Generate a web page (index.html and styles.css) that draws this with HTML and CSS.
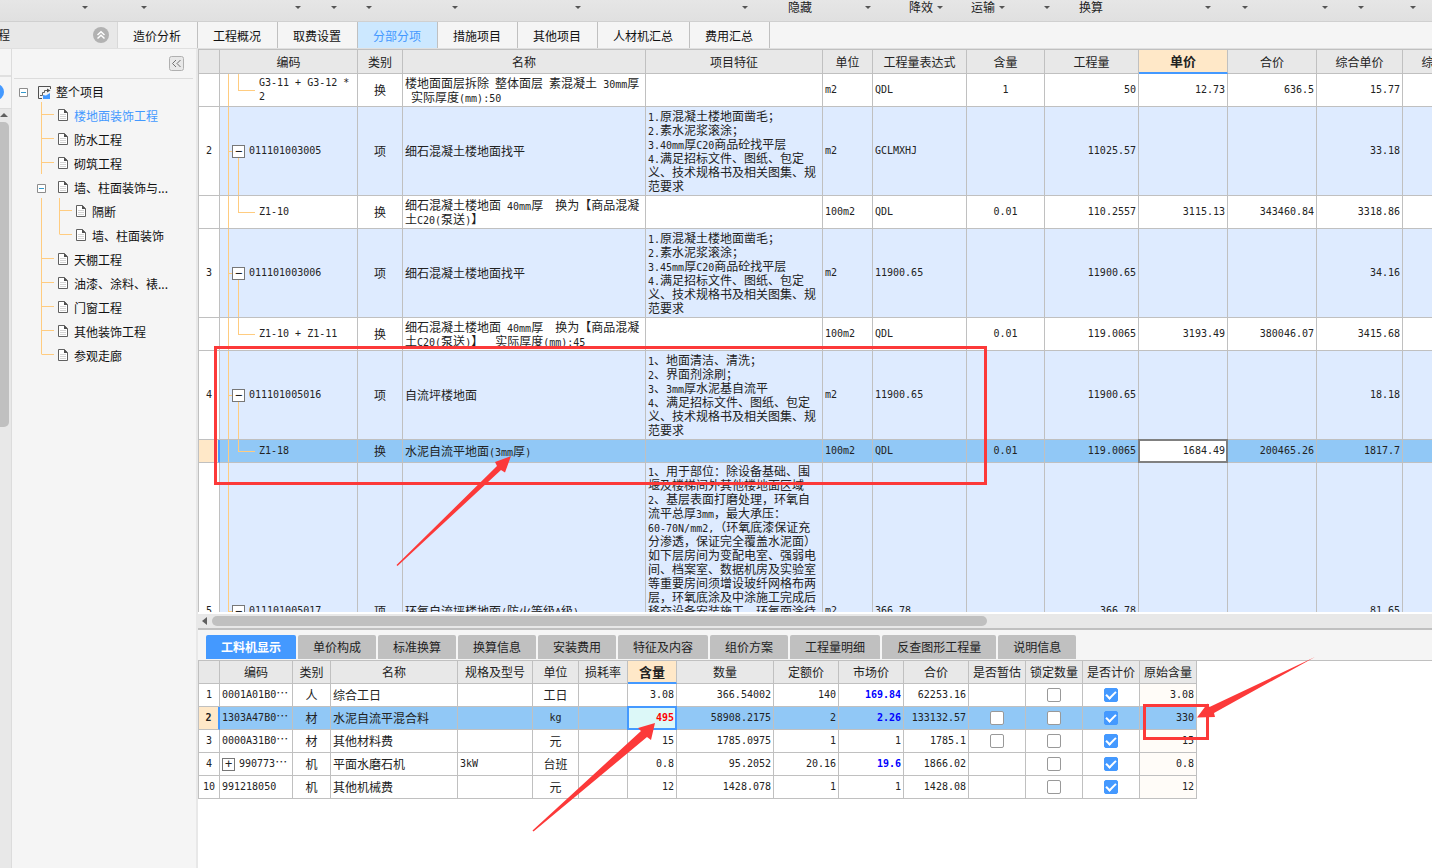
FILE: index.html
```html
<!DOCTYPE html>
<html lang="zh-CN">
<head>
<meta charset="utf-8">
<title>分部分项</title>
<link rel="stylesheet" href="styles.css">
</head>
<body>
<svg class="defs" width="0" height="0" aria-hidden="true">
  <symbol id="doc" viewBox="0 0 10 12"><path d="M.5.5h5.800L9.500 3.700v7.800h-9z" fill="#fff" stroke="#606060"/><path d="M6 0v4h4z" fill="#505050"/><path d="M2 5.500h6M2 7.500h6M2 9.500h6" stroke="#d4d4d4"/></symbol>
  <symbol id="minus" viewBox="0 0 9 9"><path d="M.5.5h8v8h-8z" fill="#fff" stroke="#8c8c8c"/><path d="M2 4.500h5" stroke="#3399cc"/></symbol>
</svg>

<header class="toolbar">
  <button><i></i></button><button><i></i></button><button><i></i></button><button><i></i></button><button><i></i></button><button><i></i></button><button><i></i></button><button><i></i></button>
  <button>隐藏</button><button><i></i></button><button>降效<i></i></button><button>运输<i></i></button><button><i></i></button><button>换算</button>
  <button><i></i></button><button><i></i></button><button><i></i></button><button><i></i></button><button><i></i></button>
</header>

<nav class="tabs">
  <div class="project">程
    <button class="up" aria-label="收起"><svg width="16" height="16" viewBox="0 0 16 16"><circle cx="8" cy="8" r="8" fill="#b2b2b2"/><path d="M4.500 8L8 4.800 11.500 8M4.500 11.500L8 8.300l3.500 3.200" fill="none" stroke="#fff" stroke-width="1.500"/></svg></button>
  </div>
  <button>造价分析</button><button>工程概况</button><button>取费设置</button><button class="on">分部分项</button><button>措施项目</button><button>其他项目</button><button>人材机汇总</button><button>费用汇总</button>
</nav>

<div class="body">
  <div class="rail">
    <div class="rail-box"></div>
    <div class="rail-dot"><svg width="5" height="16"><circle cx="-4" cy="8" r="8" fill="#4499ff"/></svg></div>
    <div class="rail-scroll"><i class="arrow-up"></i><div class="rail-thumb"></div></div>
  </div>

  <aside class="side">
    <div class="side-head"><button aria-label="折叠"><svg width="15" height="15"><rect x=".5" y=".5" width="14" height="14" rx="2" fill="#e8e8e8" stroke="#b0b0b0"/><path d="M7 4L3.500 7.500 7 11M11.500 4L8 7.500l3.500 3.500" fill="none" stroke="#707070"/></svg></button></div>
    <div class="tree">
      <svg class="tree-lines" width="80" height="290"><path d="M29.500 23v72M29.500 119v156.500M30 35.500h12M30 59.500h12M30 83.500h12M47.500 119v36.500M48 131.500h12M48 155.500h12M30 179.500h12M30 203.500h12M30 227.500h12M30 251.500h12M30 275.500h12" fill="none" stroke="#ffcc80"/></svg>
      <div class="node root"><svg class="box"><use href="#minus"/></svg><svg class="proj" width="13" height="13"><path d="M12.500 3V.5H.5v12H4" fill="none" stroke="#505050"/><path d="M2 9.500h2.500v-3h2v-2h3" fill="none" stroke="#606060"/><path d="M9 2.500l3.500 2-3.500 2z" fill="#505050"/><path d="M5 9l3 .5L12 7v6H5z" fill="#4499ff"/></svg><a href="#">整个项目</a></div>
      <div class="node l1"><svg class="doc"><use href="#doc"/></svg><a class="cur" href="#">楼地面装饰工程</a></div>
      <div class="node l1"><svg class="doc"><use href="#doc"/></svg><a href="#">防水工程</a></div>
      <div class="node l1"><svg class="doc"><use href="#doc"/></svg><a href="#">砌筑工程</a></div>
      <div class="node l1 open"><svg class="box"><use href="#minus"/></svg><svg class="doc"><use href="#doc"/></svg><a href="#">墙、柱面装饰与...</a></div>
      <div class="node l2"><svg class="doc"><use href="#doc"/></svg><a href="#">隔断</a></div>
      <div class="node l2"><svg class="doc"><use href="#doc"/></svg><a href="#">墙、柱面装饰</a></div>
      <div class="node l1"><svg class="doc"><use href="#doc"/></svg><a href="#">天棚工程</a></div>
      <div class="node l1"><svg class="doc"><use href="#doc"/></svg><a href="#">油漆、涂料、裱...</a></div>
      <div class="node l1"><svg class="doc"><use href="#doc"/></svg><a href="#">门窗工程</a></div>
      <div class="node l1"><svg class="doc"><use href="#doc"/></svg><a href="#">其他装饰工程</a></div>
      <div class="node l1"><svg class="doc"><use href="#doc"/></svg><a href="#">参观走廊</a></div>
    </div>
  </aside>

  <main class="main">
    <section class="upper">
      <table class="grid items">
        <colgroup><col class="w21"><col class="w138"><col class="w45"><col class="w243"><col class="w177"><col class="w50"><col class="w94"><col class="w78"><col class="w94"><col class="w89"><col class="w89"><col class="w86"><col class="w86"></colgroup>
        <thead><tr><th></th><th>编码</th><th>类别</th><th>名称</th><th>项目特征</th><th>单位</th><th>工程量表达式</th><th>含量</th><th>工程量</th><th class="hot">单价</th><th>合价</th><th>综合单价</th><th>综合合价</th></tr></thead>
        <tbody>
          <tr class="h33"><td></td><td class="m child">G3-11 + G3-12 *<br>2</td><td class="c">换</td><td>楼地面面层拆除<span class="m"> </span>整体面层<span class="m"> </span>素混凝土<span class="m"> 30mm</span>厚<br><span class="m"> </span>实际厚度<span class="m">(mm):50</span></td><td></td><td class="m">m2</td><td class="m">QDL</td><td class="m c">1</td><td class="m r">50</td><td class="m r">12.73</td><td class="m r">636.5</td><td class="m r">15.77</td><td></td></tr>
          <tr class="h89 blue"><td class="m c no">2</td><td class="m parent"><button class="exp">−</button>011101003005</td><td class="c">项</td><td>细石混凝土楼地面找平</td><td><span class="m">1.</span>原混凝土楼地面凿毛；<br><span class="m">2.</span>素水泥浆滚涂；<br><span class="m">3.40mm</span>厚<span class="m">C20</span>商品砼找平层<br><span class="m">4.</span>满足招标文件、图纸、包定<br>义、技术规格书及相关图集、规<br>范要求</td><td class="m">m2</td><td class="m">GCLMXHJ</td><td></td><td class="m r">11025.57</td><td></td><td></td><td class="m r">33.18</td><td></td></tr>
          <tr class="h33"><td></td><td class="m child">Z1-10</td><td class="c">换</td><td>细石混凝土楼地面<span class="m"> 40mm</span>厚<span class="m">  </span>换为【商品混凝<br>土<span class="m">C20(</span>泵送<span class="m">)</span>】</td><td></td><td class="m">100m2</td><td class="m">QDL</td><td class="m c">0.01</td><td class="m r">110.2557</td><td class="m r">3115.13</td><td class="m r">343460.84</td><td class="m r">3318.86</td><td></td></tr>
          <tr class="h89 blue"><td class="m c no">3</td><td class="m parent"><button class="exp">−</button>011101003006</td><td class="c">项</td><td>细石混凝土楼地面找平</td><td><span class="m">1.</span>原混凝土楼地面凿毛；<br><span class="m">2.</span>素水泥浆滚涂；<br><span class="m">3.45mm</span>厚<span class="m">C20</span>商品砼找平层<br><span class="m">4.</span>满足招标文件、图纸、包定<br>义、技术规格书及相关图集、规<br>范要求</td><td class="m">m2</td><td class="m">11900.65</td><td></td><td class="m r">11900.65</td><td></td><td></td><td class="m r">34.16</td><td></td></tr>
          <tr class="h33"><td></td><td class="m child">Z1-10 + Z1-11</td><td class="c">换</td><td>细石混凝土楼地面<span class="m"> 40mm</span>厚<span class="m">  </span>换为【商品混凝<br>土<span class="m">C20(</span>泵送<span class="m">)</span>】<span class="m">  </span>实际厚度<span class="m">(mm):45</span></td><td></td><td class="m">100m2</td><td class="m">QDL</td><td class="m c">0.01</td><td class="m r">119.0065</td><td class="m r">3193.49</td><td class="m r">380046.07</td><td class="m r">3415.68</td><td></td></tr>
          <tr class="h89 blue"><td class="m c no">4</td><td class="m parent"><button class="exp">−</button>011101005016</td><td class="c">项</td><td>自流坪楼地面</td><td><span class="m">1</span>、地面清洁、清洗；<br><span class="m">2</span>、界面剂涂刷；<br><span class="m">3</span>、<span class="m">3mm</span>厚水泥基自流平<br><span class="m">4</span>、满足招标文件、图纸、包定<br>义、技术规格书及相关图集、规<br>范要求</td><td class="m">m2</td><td class="m">11900.65</td><td></td><td class="m r">11900.65</td><td></td><td></td><td class="m r">18.18</td><td></td></tr>
          <tr class="h23 sel"><td class="mark"></td><td class="m child">Z1-18</td><td class="c">换</td><td>水泥自流平地面<span class="m">(3mm</span>厚<span class="m">)</span></td><td></td><td class="m">100m2</td><td class="m">QDL</td><td class="m c">0.01</td><td class="m r">119.0065</td><td class="m r edit">1684.49</td><td class="m r">200465.26</td><td class="m r">1817.7</td><td></td></tr>
          <tr class="h297 blue"><td class="m c no">5</td><td class="m parent"><button class="exp">−</button>011101005017</td><td class="c">项</td><td>环氧自流坪楼地面<span class="m">(</span>防火等级<span class="m">A</span>级<span class="m">)</span></td><td class="top"><span class="m">1</span>、用于部位：除设备基础、围<br>堰及楼梯间外其他楼地面区域<br><span class="m">2</span>、基层表面打磨处理，环氧自<br>流平总厚<span class="m">3mm</span>，最大承压：<br><span class="m">60-70N/mm2,</span>（环氧底漆保证充<br>分渗透，保证完全覆盖水泥面）<br>如下层房间为变配电室、强弱电<br>间、档案室、数据机房及实验室<br>等重要房间须增设玻纤网格布两<br>层，环氧底涂及中涂施工完成后<br>移交设备安装施工，环氧面涂待</td><td class="m">m2</td><td class="m">366.78</td><td></td><td class="m r">366.78</td><td></td><td></td><td class="m r">81.65</td><td></td></tr>
        </tbody>
      </table>
    </section>
    <div class="hscroll"><i class="arrow-left"></i><div class="thumb"></div></div>

    <section class="lower">
      <div class="subtabs"><button class="on">工料机显示</button><button>单价构成</button><button>标准换算</button><button>换算信息</button><button>安装费用</button><button>特征及内容</button><button>组价方案</button><button>工程量明细</button><button>反查图形工程量</button><button>说明信息</button></div>
      <div class="detail">
      <table class="grid res">
        <colgroup><col class="w21"><col class="w73"><col class="w38"><col class="w127"><col class="w75"><col class="w46"><col class="w49"><col class="w49"><col class="w97"><col class="w65"><col class="w65"><col class="w65"><col class="w57"><col class="w57"><col class="w57"><col class="w57"></colgroup>
        <thead><tr><th></th><th>编码</th><th>类别</th><th>名称</th><th>规格及型号</th><th>单位</th><th>损耗率</th><th class="hot">含量</th><th>数量</th><th>定额价</th><th>市场价</th><th>合价</th><th>是否暂估</th><th>锁定数量</th><th>是否计价</th><th>原始含量</th></tr></thead>
        <tbody>
          <tr class="h23"><td class="m c no">1</td><td class="m">0001A01B0<span class="z">…</span></td><td class="c">人</td><td>综合工日</td><td></td><td class="c">工日</td><td></td><td class="m r">3.08</td><td class="m r">366.54002</td><td class="m r">140</td><td class="m r price">169.84</td><td class="m r">62253.16</td><td class="c"></td><td class="c"><input type="checkbox" aria-label="锁定数量"></td><td class="c"><input type="checkbox" checked aria-label="是否计价"></td><td class="m r orig">3.08</td></tr>
          <tr class="h23 sel"><td class="m c mark no"><b>2</b></td><td class="m">1303A47B0<span class="z">…</span></td><td class="c">材</td><td>水泥自流平混合料</td><td></td><td class="m c">kg</td><td></td><td class="m r focus">495</td><td class="m r">58908.2175</td><td class="m r">2</td><td class="m r price">2.26</td><td class="m r">133132.57</td><td class="c"><input type="checkbox" aria-label="是否暂估"></td><td class="c"><input type="checkbox" aria-label="锁定数量"></td><td class="c"><input type="checkbox" checked aria-label="是否计价"></td><td class="m r orig">330</td></tr>
          <tr class="h23"><td class="m c no">3</td><td class="m">0000A31B0<span class="z">…</span></td><td class="c">材</td><td>其他材料费</td><td></td><td class="c">元</td><td></td><td class="m r">15</td><td class="m r">1785.0975</td><td class="m r">1</td><td class="m r">1</td><td class="m r">1785.1</td><td class="c"><input type="checkbox" aria-label="是否暂估"></td><td class="c"><input type="checkbox" aria-label="锁定数量"></td><td class="c"><input type="checkbox" checked aria-label="是否计价"></td><td class="m r orig">15</td></tr>
          <tr class="h23"><td class="m c no">4</td><td class="m"><button class="exp">+</button>990773<span class="z">…</span></td><td class="c">机</td><td>平面水磨石机</td><td class="m">3kW</td><td class="c">台班</td><td></td><td class="m r">0.8</td><td class="m r">95.2052</td><td class="m r">20.16</td><td class="m r price">19.6</td><td class="m r">1866.02</td><td></td><td class="c"><input type="checkbox" aria-label="锁定数量"></td><td class="c"><input type="checkbox" checked aria-label="是否计价"></td><td class="m r orig">0.8</td></tr>
          <tr class="h23"><td class="m c no">10</td><td class="m">991218050</td><td class="c">机</td><td>其他机械费</td><td></td><td class="c">元</td><td></td><td class="m r">12</td><td class="m r">1428.078</td><td class="m r">1</td><td class="m r">1</td><td class="m r">1428.08</td><td></td><td class="c"><input type="checkbox" aria-label="锁定数量"></td><td class="c"><input type="checkbox" checked aria-label="是否计价"></td><td class="m r orig">12</td></tr>
        </tbody>
      </table>
      </div>
    </section>
  </main>
</div>

<svg class="notes" width="1432" height="868" aria-hidden="true">
  <g fill="none" stroke="#fc3939" stroke-width="3"><path d="M215.500 347.500h770v136h-770z"/><path d="M1144.500 705.500h63v33h-63z"/></g>
  <g fill="#fc3939">
    <path d="M511 456l-16 6 2 4L396.500 565l1 1L501 470l4 2.500z"/>
    <path d="M655 723l-17 5 3 3L532.500 830.500l1 1L647 737l4 3z"/>
    <path d="M1197 717.500l10.500-14 2 3.500 105.500-50-101 56 1 4z"/>
  </g>
</svg>
</body>
</html>
```
FILE: styles.css
```css
* { box-sizing: border-box; }
body {
  margin: 0;
  height: 100vh;
  display: flex;
  flex-direction: column;
  overflow: hidden;
  background: #f5f5f5;
  color: #222;
  font: 12px/14px "Noto Sans CJK SC", sans-serif;
}
button { border: 0; padding: 0; background: none; color: inherit; font: inherit; white-space: nowrap; }
a { color: #111; text-decoration: none; }
svg { display: block; }
.defs { position: absolute; }

/* toolbar */
.toolbar {
  flex: none;
  height: 22px;
  display: grid;
  grid-template-columns: 88px 59px 154px 36px 35px 86px 123px 167px 64px 59px 72px 62px 45px 53px 108px 37px 80px 36px 52px;
  border-bottom: 1px solid #d0d0d0;
  background: linear-gradient(#e6e6e6, #e0e0e0);
}
.toolbar button { display: flex; justify-content: flex-end; gap: 4px; height: 14px; }
.toolbar i { align-self: center; border: 3px solid transparent; border-top-color: #555; border-bottom: 0; }

/* module tabs */
.tabs { flex: none; display: flex; height: 27px; border-bottom: 1px solid #e0e0e0; }
.project {
  width: 118px;
  display: flex;
  justify-content: space-between;
  align-items: center;
  padding-right: 8px;
  background: #e8e8e8;
  border-right: 1px solid #d8d8d8;
  text-indent: -2px;
}
.tabs > button { padding: 2px 16px 0 15px; border-right: 1px solid #c0c0c0; color: #111; }
.tabs > button.on { background: #cce8ff; color: #4499ff; }

.body { flex: 1; min-height: 0; display: flex; }

/* left rail */
.rail { flex: none; width: 12px; display: flex; flex-direction: column; border-right: 1px solid #dcdcdc; }
.rail-box { height: 28px; border-bottom: 2px solid #e0e0e0; }
.rail-dot { height: 32px; padding-top: 7px; border-bottom: 1px solid #dcdcdc; }
.rail-scroll { flex: 1; padding-top: 4px; background: #e8e8e8; }
.rail-thumb { width: 9px; height: 305px; margin-top: 5px; background: #c0c0c0; border-radius: 0 5px 5px 0; }
.arrow-up { display: block; width: 8px; border: 4px solid transparent; border-bottom-color: #606060; border-top: 0; }

/* project tree */
.side { flex: none; width: 186px; padding: 0 3px 0 0; border-right: 2px solid #e8e8e8; }
.side-head { height: 30px; margin-left: 2px; display: flex; justify-content: flex-end; padding: 7px 9px 0 0; border-bottom: 1px solid #dcdcdc; }
.side-head button { height: 15px; }
.tree { position: relative; padding-top: 1px; }
.tree-lines { position: absolute; left: 0; top: 0; }
.node { position: relative; display: flex; align-items: center; height: 24px; }
.node a { white-space: nowrap; }
.node a.cur { color: #4499ff; }
.root { padding-left: 7px; }
.l1 { padding-left: 46px; }
.l1.open { padding-left: 25px; }
.l2 { padding-left: 64px; }
.box { width: 9px; height: 9px; margin-right: 10px; }
.open .box { margin-right: 12px; }
.proj { margin-right: 5px; }
.doc { width: 10px; height: 12px; margin: 0 6px 2px 0; }

/* grids */
.main { flex: 1; min-width: 0; display: flex; flex-direction: column; background: #fff; }
.upper { flex: 1; min-height: 0; overflow: hidden; border-top: 1px solid #c0c0c0; border-left: 1px solid #c0c0c0; }
.grid { table-layout: fixed; width: 0; border-spacing: 0; }
.w21 { width: 21px; } .w38 { width: 38px; } .w45 { width: 45px; } .w46 { width: 46px; }
.w49 { width: 49px; } .w50 { width: 50px; } .w57 { width: 57px; } .w65 { width: 65px; }
.w73 { width: 73px; } .w75 { width: 75px; } .w78 { width: 78px; } .w86 { width: 86px; }
.w89 { width: 89px; } .w94 { width: 94px; } .w97 { width: 97px; } .w127 { width: 127px; }
.w138 { width: 138px; } .w177 { width: 177px; } .w243 { width: 243px; }
th, td { padding: 0 2px; border: 0 solid #c0c0c0; border-width: 0 1px 1px 0; white-space: nowrap; text-align: left; }
th { height: 24px; padding: 0; background: #e8e8e8; font-weight: 400; text-align: center; }
.res th { height: 23px; }
th.hot { background: #ffe8c8; border-bottom: 2px solid #4499ff; font-size: 13px; font-weight: 700; }
.h23 td { height: 23px; }
.h33 td { height: 33px; }
.h89 td { height: 89px; }
.h297 td { height: 297px; }
td.top { vertical-align: top; padding-top: 1px; }
.m { font-family: "DejaVu Sans Mono", "Noto Sans CJK SC", monospace; font-size: 10px; white-space: pre; }
span.m { line-height: 0; }
.z { font: 12px/0 "Noto Sans CJK SC", sans-serif; }
.c { text-align: center; }
.r { text-align: right; }
.no { padding: 0; }
.blue td { background-color: #deebff; }
.blue td.no { background-color: #fff; }
.sel td { background-color: #91c8f6; }
.sel td.mark { background-color: #ffe8c8; border-right: 2px solid #4499ff; }
.price { color: #00f; font-weight: 700; }
.orig { background-color: #fffcf8; }
.grid td.parent {
  padding-left: 12px;
  background-image: linear-gradient(#ffcc80, #ffcc80), linear-gradient(#ffcc80, #ffcc80), linear-gradient(#ffcc80, #ffcc80);
  background-repeat: no-repeat;
  background-position: 8px 0, 18px 100%, 8px 50%;
  background-size: 1px 100%, 1px 50%, 8px 1px;
}
.grid td.child {
  padding-left: 39px;
  background-image: linear-gradient(#ffcc80, #ffcc80), linear-gradient(#ffcc80, #ffcc80), linear-gradient(#ffcc80, #ffcc80);
  background-repeat: no-repeat;
  background-position: 8px 0, 18px 0, 18px 50%;
  background-size: 1px 100%, 1px 50%, 17px 1px;
}
.exp {
  width: 13px;
  height: 13px;
  margin-right: 4px;
  border: 1px solid #777;
  background: #fff;
  font-size: 12px;
  line-height: 11px;
  vertical-align: middle;
}
.edit, .focus { position: relative; }
.sel td.edit { background-color: #fff; }
.sel td.focus { background-color: #dcf8f8; color: #f00; font-weight: 700; }
.edit::after, .focus::after { content: ""; position: absolute; inset: -1px; border: 2px solid #808080; }
.focus::after { border-color: #4499ff; }

.hscroll { flex: none; display: flex; align-items: center; height: 18px; padding-left: 4px; border-top: 2px solid #fff; border-bottom: 2px solid #c0c0c0; background: #e8e8e8; }
.arrow-left { border: 4px solid transparent; border-right: 5px solid #606060; border-left: 0; margin-right: 5px; }
.thumb { width: 63%; height: 10px; background: #c0c0c0; border-radius: 5px; }

/* lower panel */
.lower { flex: none; height: 238px; }
.subtabs { display: flex; gap: 2px; height: 30px; padding: 5px 8px 1px; background: #f5f5f5; }
.subtabs button { padding: 0 15px; background: #c0c0c0; border-radius: 2px 2px 0 0; }
.subtabs .on { background: #4499ff; color: #fff; font-weight: 700; }
.detail { border-top: 1px solid #c0c0c0; border-left: 1px solid #c0c0c0; }
input[type="checkbox"] {
  appearance: none;
  display: block;
  width: 14px;
  height: 14px;
  margin: 0 auto;
  border: 1px solid #999;
  border-radius: 2px;
  background: #fff;
}
input:checked { border-color: #4499ff; background: #4499ff; }
input:checked::after { content: ""; display: block; width: 4px; height: 8px; margin: 0 auto; border: solid #fff; border-width: 0 2px 2px 0; transform: rotate(45deg); }

.notes { position: absolute; left: 0; top: 0; pointer-events: none; }
```
